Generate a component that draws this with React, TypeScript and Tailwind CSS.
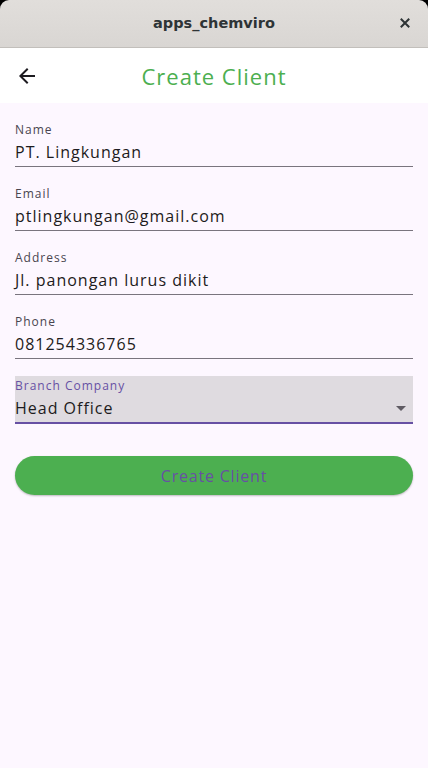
import React from 'react';

const fields = [
  { label: 'Name', value: 'PT. Lingkungan' },
  { label: 'Email', value: 'ptlingkungan@gmail.com' },
  { label: 'Address', value: 'Jl. panongan lurus dikit' },
  { label: 'Phone', value: '081254336765' },
];

const font = { fontFamily: '"Open Sans", "Liberation Sans", sans-serif' };

const App: React.FC = () => {
  return (
    <div className="w-[428px] h-[768px] bg-black flex flex-col overflow-hidden">
      {/* Window title bar */}
      <div className="h-[48px] shrink-0 rounded-t-[9px] bg-gradient-to-b from-[#e1dedb] to-[#d9d6d3] border-b border-[#c2bfbb] flex items-center justify-center relative">
        <span className="font-['DejaVu_Sans',sans-serif] font-bold text-[14.5px] text-[#2e3436]">apps_chemviro</span>
        <svg className="absolute left-[400px] top-[18px]" width="10" height="10" viewBox="0 0 10 10">
          <path d="M1.5 1.5 L8.5 8.5 M8.5 1.5 L1.5 8.5" stroke="#2e3436" strokeWidth="2" strokeLinecap="square" />
        </svg>
      </div>

      <div className="flex-1 flex flex-col bg-[#fdf7ff]" style={font}>
        {/* App bar */}
        <div className="h-[55px] shrink-0 bg-white flex items-center relative">
          <svg className="absolute left-[15px] top-[16px]" width="24" height="24" viewBox="0 0 24 24">
            <path d="M20 11H7.83l5.59-5.59L12 4l-8 8 8 8 1.41-1.41L7.83 13H20v-2z" fill="#1d1b20" />
          </svg>
          <h1 className="flex-1 text-center text-[22px] leading-[28px] text-[#4caf50] tracking-[1px]">Create Client</h1>
        </div>

        {/* Form */}
        <div className="px-[15px] flex flex-col">
          {fields.map((f) => (
            <div key={f.label} className="pt-[19px] pb-[2px] border-b border-[#79747e]">
              <div className="text-[12px] leading-[16px] text-[#49454f] tracking-[1px]">{f.label}</div>
              <div className="mt-[2px] text-[16px] leading-[24px] text-[#1d1b20] tracking-[1px]">{f.value}</div>
            </div>
          ))}

          {/* Dropdown */}
          <div className="mt-[17px] bg-[#dfdbe0] pt-[2px] pb-[2px] border-b-2 border-[#6750a4] flex items-end">
            <div className="flex-1">
              <div className="text-[12px] leading-[16px] text-[#6750a4] tracking-[1px]">Branch Company</div>
              <div className="mt-[2px] text-[16px] leading-[24px] text-[#1d1b20] tracking-[1px]">Head Office</div>
            </div>
            <svg width="24" height="24" viewBox="0 0 24 24">
              <path d="M7 10l5 5 5-5z" fill="#5f5b63" />
            </svg>
          </div>

          <button className="mt-[32px] h-[39px] rounded-full bg-[#4caf50] shadow-[0_1px_2px_rgba(0,0,0,0.25)] text-[16px] font-medium text-[#6750a4] tracking-[0.8px]">
            Create Client
          </button>
        </div>
      </div>
    </div>
  );
};

export default App;
